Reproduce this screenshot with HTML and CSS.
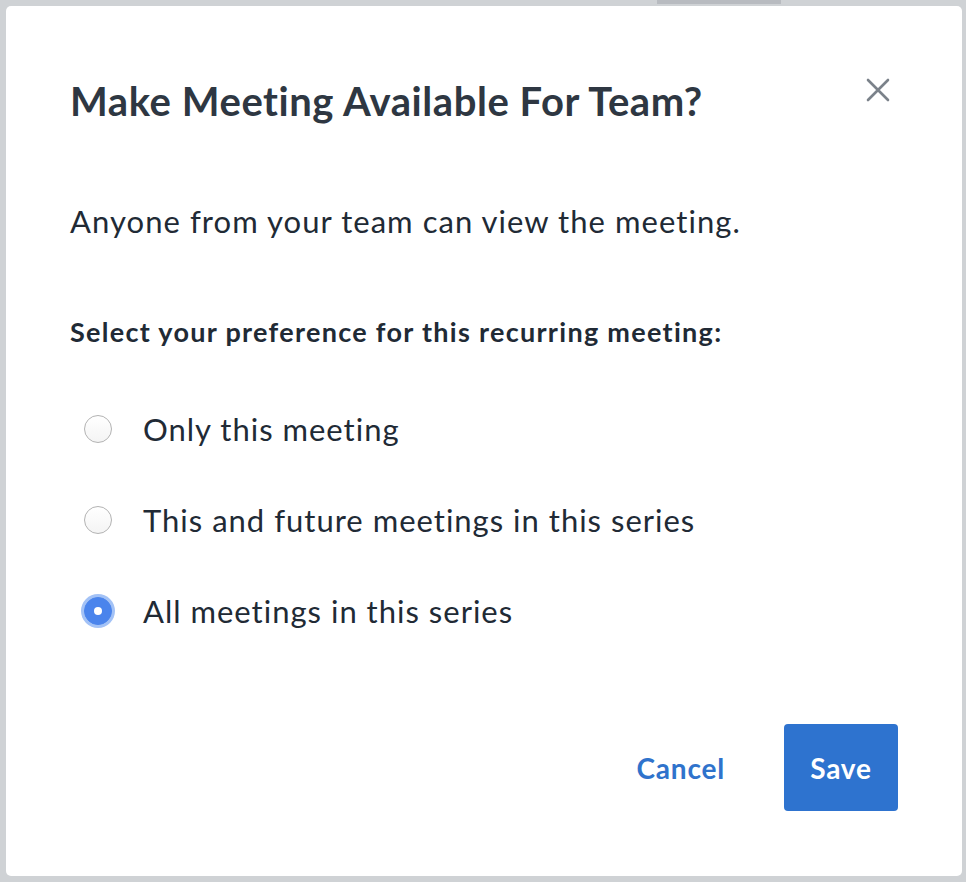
FILE: index.html
```html
<!DOCTYPE html>
<html>
<head>
<meta charset="utf-8">
<link rel="stylesheet" href="styles.css">
</head>
<body>
<div class="backdrop">
  <div class="topmarks"><span class="bar"></span></div>
  <div class="modal">
    <div class="header">
      <h1 class="title">Make Meeting Available For Team?</h1>
      <button class="close" aria-label="Close">
        <svg width="24" height="24" viewBox="0 0 24 24"><path d="M2 2L22 22M22 2L2 22" stroke="#7b828a" stroke-width="2.6" stroke-linecap="round"/></svg>
      </button>
    </div>
    <p class="desc">Anyone from your team can view the meeting.</p>
    <p class="label">Select your preference for this recurring meeting:</p>
    <div class="options">
      <label class="option"><span class="radio"></span><span class="otext">Only this meeting</span></label>
      <label class="option"><span class="radio"></span><span class="otext">This and future meetings in this series</span></label>
      <label class="option"><span class="radio checked"></span><span class="otext">All meetings in this series</span></label>
    </div>
    <div class="footer">
      <button class="cancel">Cancel</button>
      <button class="save">Save</button>
    </div>
  </div>
</div>
</body>
</html>
```
FILE: styles.css
```css
html, body {
  margin: 0;
  padding: 0;
}
body {
  width: 966px;
  height: 882px;
  background: #cfd2d5;
  font-family: Lato, "Noto Sans", sans-serif;
  overflow: hidden;
}
.backdrop {
  position: relative;
  width: 966px;
  height: 882px;
  padding: 6px 4px 6px 6px;
  box-sizing: border-box;
}
.topmarks .bar {
  position: absolute;
  left: 657px;
  top: 0;
  width: 124px;
  height: 4px;
  background: #b8bbc0;
}
.modal {
  background: #fff;
  border-radius: 5px;
  height: 870px;
  box-sizing: border-box;
  padding: 0 64px 0 64px;
  display: flex;
  flex-direction: column;
}
.header {
  display: flex;
  justify-content: space-between;
  align-items: flex-start;
  padding-top: 70px;
}
.title {
  margin: 0;
  font-size: 40px;
  font-weight: 700;
  letter-spacing: 0.55px;
  color: #2e3742;
  line-height: 50px;
}
.close {
  border: 0;
  background: none;
  padding: 0;
  margin: 2px 8px 0 0;
  width: 24px;
  height: 24px;
  cursor: pointer;
}
.close svg { display: block; }
.desc {
  margin: 75px 0 0 0;
  font-size: 31px;
  letter-spacing: 1.05px;
  line-height: 40px;
  color: #212a35;
}
.label {
  margin: 76px 0 0 0;
  font-size: 27px;
  font-weight: 700;
  letter-spacing: 1.3px;
  color: #212a35;
  line-height: 30px;
}
.options {
  margin-top: 62px;
  display: flex;
  flex-direction: column;
  gap: 51px;
}
.option {
  display: flex;
  align-items: center;
  height: 40px;
}
.radio {
  width: 26px;
  height: 26px;
  border-radius: 50%;
  border: 1px solid #b3b3b3;
  background: linear-gradient(#fff, #f4f4f4);
  margin-left: 14px;
  margin-right: 31px;
  flex: none;
  box-sizing: content-box;
}
.radio.checked {
  border-color: #4a84ec;
  background: #4a84ec;
  box-shadow: 0 0 0 3px #a3c2f6;
  position: relative;
}
.radio.checked::after {
  content: "";
  position: absolute;
  left: 9px;
  top: 9px;
  width: 8px;
  height: 8px;
  border-radius: 50%;
  background: #fff;
}
.otext {
  font-size: 31px;
  letter-spacing: 1px;
  color: #212a35;
  line-height: 40px;
}
.footer {
  margin-top: auto;
  margin-bottom: 65px;
  display: flex;
  justify-content: flex-end;
  align-items: center;
  gap: 59px;
}
.cancel {
  border: 0;
  background: none;
  font-family: inherit;
  font-size: 28px;
  letter-spacing: 0.8px;
  font-weight: 700;
  color: #2f73cc;
  padding: 0;
}
.save {
  border: 0;
  background: #2e73cf;
  color: #fff;
  font-family: inherit;
  font-size: 28px;
  letter-spacing: 0.8px;
  font-weight: 700;
  width: 114px;
  height: 87px;
  border-radius: 4px;
  padding: 0;
}
```
